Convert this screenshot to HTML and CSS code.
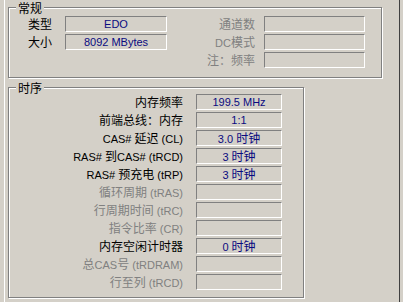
FILE: index.html
```html
<!DOCTYPE html>
<html>
<head>
<meta charset="utf-8">
<link rel="stylesheet" href="styles.css">
</head>
<body>
<div class="page">
  <div class="group g1">
    <span class="legend c">常规</span>
    <div class="grid1">
      <span class="lbl left c">类型</span><span class="box val">EDO</span><span class="lbl right dis"><span class="c">通道数</span></span><span class="box"></span>
      <span class="lbl left c">大小</span><span class="box val">8092 MBytes</span><span class="lbl right dis">DC<span class="c">模式</span></span><span class="box"></span>
      <span></span><span></span><span class="lbl right dis"><span class="c">注：频率</span></span><span class="box"></span>
    </div>
  </div>
  <div class="group g2">
    <span class="legend c">时序</span>
    <div class="grid2">
      <span class="lbl"><span class="c">内存频率</span></span><span class="box val">199.5 MHz</span>
      <span class="lbl"><span class="c">前端总线：内存</span></span><span class="box val">1:1</span>
      <span class="lbl">CAS# <span class="c">延迟</span> (CL)</span><span class="box val">3.0 <span class="c">时钟</span></span>
      <span class="lbl">RAS# <span class="c">到</span>CAS# (tRCD)</span><span class="box val">3 <span class="c">时钟</span></span>
      <span class="lbl">RAS# <span class="c">预充电</span> (tRP)</span><span class="box val">3 <span class="c">时钟</span></span>
      <span class="lbl dis"><span class="c">循环周期</span> (tRAS)</span><span class="box"></span>
      <span class="lbl dis"><span class="c">行周期时间</span> (tRC)</span><span class="box"></span>
      <span class="lbl dis"><span class="c">指令比率</span> (CR)</span><span class="box"></span>
      <span class="lbl"><span class="c">内存空闲计时器</span></span><span class="box val">0 <span class="c">时钟</span></span>
      <span class="lbl dis"><span class="c">总</span>CAS<span class="c">号</span> (tRDRAM)</span><span class="box"></span>
      <span class="lbl dis"><span class="c">行至列</span> (tRCD)</span><span class="box"></span>
    </div>
  </div>
</div>
</body>
</html>
```

FILE: styles.css
```css
html, body {
  margin: 0;
  padding: 0;
}
body {
  background: #d4d0c8;
  width: 403px;
  height: 302px;
  overflow: hidden;
  font-family: "Liberation Sans", "Noto Sans CJK SC", sans-serif;
  font-size: 11px;
  color: #000;
}
.c {
  font-family: "Noto Sans CJK SC", sans-serif;
  font-size: 12px;
}
.page {
  margin-left: 4px;
  width: 391px;
  height: 295px;
  border-left: 1px solid #ffffff;
  border-right: 1px solid #404040;
  padding: 7px 0 0 3px;
}
.group {
  position: relative;
  box-sizing: border-box;
  border: 1px solid #808080;
  box-shadow: inset 1px 1px 0 #ffffff, 1px 1px 0 #ffffff;
}
.legend {
  position: absolute;
  top: -8px;
  left: 7px;
  padding: 0 2px;
  line-height: 15px;
  background: #d4d0c8;
}
.g1 {
  width: 374px;
  height: 71px;
  padding-top: 8px;
}
.g2 {
  margin-top: 9px;
  width: 296px;
  height: 211px;
  padding-top: 6px;
}
.grid1 {
  display: grid;
  grid-template-columns: 56px 102px 97px 101px;
  grid-auto-rows: 16px;
  row-gap: 2px;
}
.grid2 {
  display: grid;
  grid-template-columns: 187px 86px;
  grid-auto-rows: 16px;
  row-gap: 2px;
}
.lbl {
  line-height: 16px;
  white-space: nowrap;
  text-align: right;
  padding-right: 13px;
}
.lbl.left {
  text-align: left;
  padding-left: 19px;
  padding-right: 0;
}
.lbl.right {
  padding-right: 9px;
}
.dis {
  color: #808080;
}
.box {
  box-sizing: border-box;
  height: 16px;
  border-top: 1px solid #808080;
  border-left: 1px solid #808080;
  border-bottom: 1px solid #ffffff;
  border-right: 1px solid #ffffff;
  line-height: 14px;
  text-align: center;
  white-space: nowrap;
}
.val {
  color: #0a0a80;
}
```
